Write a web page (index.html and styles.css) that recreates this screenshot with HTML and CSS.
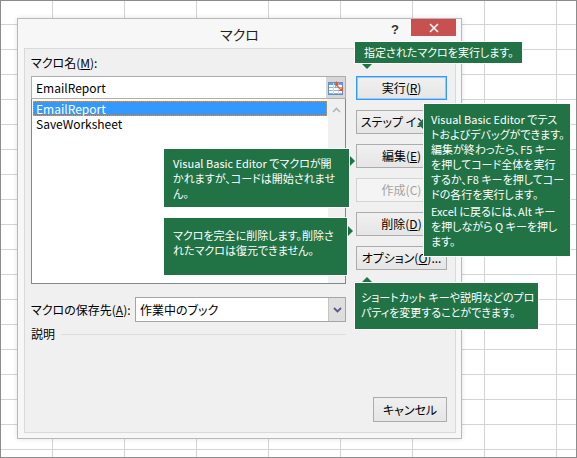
FILE: index.html
```html
<html lang="ja">
  <head>
    <meta charset="UTF-8" />
    <meta name="viewport" content="width=device-width, initial-scale=1.0" />
    <title>マクロ</title>
    <link rel="stylesheet" href="styles.css">
  </head>
  <body>
    <div class="sheet">
      <div class="dialog">
        <div class="titlebar">
          <span class="title">マクロ</span>
          <span class="help">?</span>
          <span class="close">
            <svg width="10" height="10" viewBox="0 0 10 10">
              <path d="M1 1 L9 9 M9 1 L1 9" stroke="#fff" stroke-width="1.6" />
            </svg>
          </span>
        </div>
        <div class="client">
          <div class="top">
            <div class="left">
              <div class="label">マクロ名(<u>M</u>):</div>
              <div class="name-row">
                <div class="name-input">EmailReport</div>
                <div class="pick-btn">
                  <svg width="16" height="16" viewBox="0 0 16 16">
                    <rect x="0.5" y="2.5" width="14" height="12" fill="#fff" stroke="#5f8fc4" />
                    <rect x="1" y="3" width="13" height="2" fill="#6d9fd6" />
                    <path d="M1 7.5 H14 M1 10.5 H14 M1 13.5 H14" stroke="#8db3df" />
                    <path d="M5.5 3 V14 M10.5 3 V14" stroke="#c9d9ee" />
                    <path d="M8 1 L11 4 L9.5 5.5 L13 9 L15 6 L15 11 L10 11 L12 9.5 L8.5 6 L7 7.5 Z" fill="#e4572e" />
                  </svg>
                </div>
              </div>
              <div class="listbox">
                <div class="items">
                  <div class="item selected">EmailReport</div>
                  <div class="item">SaveWorksheet</div>
                </div>
                <div class="scrollbar">
                  <svg width="9" height="6" viewBox="0 0 9 6">
                    <path d="M1 5 L4.5 1.5 L8 5" fill="none" stroke="#b5b5b5" stroke-width="1.6" />
                  </svg>
                </div>
              </div>
            </div>
            <div class="buttons">
              <button class="btn default">実行(<u>R</u>)</button>
              <button class="btn">ステップ イン(<u>S</u>)</button>
              <button class="btn">編集(<u>E</u>)</button>
              <button class="btn disabled">作成(C)</button>
              <button class="btn">削除(<u>D</u>)</button>
              <button class="btn">オプション(<u>O</u>)...</button>
            </div>
          </div>
          <div class="store-row">
            <span class="store-label">マクロの保存先(<u>A</u>):</span>
            <div class="combo">
              <span class="combo-text">作業中のブック</span>
              <span class="combo-btn">
                <svg width="9" height="6" viewBox="0 0 9 6">
                  <path d="M1 1 L4.5 4.5 L8 1" fill="none" stroke="#5a5a86" stroke-width="1.8" />
                </svg>
              </span>
            </div>
          </div>
          <div class="desc-row">
            <span>説明</span>
            <span class="rule"></span>
          </div>
          <div class="footer">
            <button class="btn cancel">キャンセル</button>
          </div>
        </div>
      </div>

      <!-- callouts -->
      <div class="callout c-run">指定されたマクロを実行します。</div>
      <div class="callout c-vbe">
        <div>Visual Basic Editor でテス<br />トおよびデバッグができます。<br />編集が終わったら、F5 キー<br />を押してコード全体を実行<br />するか、F8 キーを押してコー<br />ドの各行を実行します。</div>
        <div class="para">Excel に戻るには、Alt キー<br />を押しながら Q キーを押し<br />ます。</div>
      </div>
      <div class="callout c-edit">Visual Basic Editor でマクロが開<br />かれますが、コードは開始されませ<br />ん。</div>
      <div class="callout c-del">マクロを完全に削除します。削除さ<br />れたマクロは復元できません。</div>
      <div class="callout c-opt">ショートカット キーや説明などのプロ<br />パティを変更することができます。</div>
    </div>
  </body>
</html>
```

FILE: styles.css
```css
/* page */
body {
  margin: 0;
  padding: 0;
  font-family: "Noto Sans CJK JP", "Noto Sans", sans-serif;
  font-size: 12px;
  font-feature-settings: "palt";
  color: #000;
}

u {
  text-underline-offset: 1px;
}

/* spreadsheet behind the dialog */
.sheet {
  position: relative;
  width: 575px;
  height: 456px;
  border: 1px solid #8c8c8c;
  background-color: #fff;
  background-image: linear-gradient(to right, transparent 71px, #d4d4d4 71px),
    linear-gradient(to bottom, transparent 24px, #d4d4d4 24px);
  background-size: 72px 25px;
  background-position: -20px -1px;
  overflow: hidden;
}

/* dialog window */
.dialog {
  margin: 17px 0 0 16px;
  width: 445px;
  height: 421px;
  box-sizing: border-box;
  border: 1px solid #b9b9b9;
  background: #f7f7f7;
  padding: 0 5px 5px 6px;
  display: flex;
  flex-direction: column;
  box-shadow: 0 0 5px rgba(0, 0, 0, 0.12);
}

.titlebar {
  height: 29px;
  display: flex;
  align-items: flex-start;
}

.title {
  flex: 1;
  padding-left: 70px;
  text-align: center;
  font-size: 14px;
  line-height: 30px;
  color: #222;
}

.help {
  width: 20px;
  margin-right: 6px;
  text-align: center;
  font-family: "Liberation Sans", sans-serif;
  font-weight: bold;
  font-size: 13px;
  line-height: 22px;
  color: #333;
}

.close {
  width: 45px;
  height: 17px;
  background: #c75050;
  display: flex;
  align-items: center;
  justify-content: center;
}

.client {
  flex: 1;
  border: 1px solid #d9d9d9;
  background: #f0f0f0;
  padding: 6px 8px 10px 6px;
  display: flex;
  flex-direction: column;
}

.top {
  display: flex;
  gap: 10px;
}

.left {
  width: 315px;
}

.label {
  line-height: 16px;
  margin-bottom: 5px;
}

.name-row {
  display: flex;
  height: 23px;
}

.name-input {
  flex: 1;
  border: 1px solid #abadb3;
  border-right: none;
  background: #fff;
  padding-left: 4px;
  line-height: 21px;
}

.pick-btn {
  width: 19px;
  border: 1px solid #abadb3;
  border-left: none;
  background: #d6d6d6;
  display: flex;
  align-items: center;
  justify-content: center;
}

.listbox {
  margin-top: -1px;
  height: 186px;
  box-sizing: border-box;
  border: 1px solid #828790;
  background: #fff;
  display: flex;
}

.items {
  flex: 1;
  padding: 2px 1px 0 1px;
}

.item {
  height: 15px;
  line-height: 15px;
  padding-left: 3px;
}

.item.selected {
  background: #3399ff;
  color: #fff;
  outline: 1px dotted #e8913a;
  outline-offset: -1px;
}

.scrollbar {
  width: 17px;
  background: #f0f0f0;
  display: flex;
  justify-content: center;
  align-items: flex-start;
  padding-top: 8px;
  box-sizing: border-box;
}

/* command buttons */
.buttons {
  width: 91px;
  margin-top: 21px;
  display: flex;
  flex-direction: column;
  gap: 10px;
}

.btn {
  height: 24px;
  width: 91px;
  padding: 0;
  border: 1px solid #acacac;
  background: linear-gradient(#f0f0f0, #e5e5e5);
  font: inherit;
  color: #000;
  line-height: 22px;
  white-space: nowrap;
  overflow: hidden;
  text-align: center;
}

.btn.default {
  border-color: #3399ff;
  box-shadow: inset 0 0 0 1px #9cc9f4;
}

.btn.disabled {
  color: #a3a3a3;
  border-color: #d3d3d3;
  background: #f4f4f4;
}

.store-row {
  width: 315px;
  margin-top: 13px;
  display: flex;
  align-items: center;
}

.store-label {
  width: 104px;
}

.combo {
  flex: 1;
  height: 25px;
  box-sizing: border-box;
  border: 1px solid #a5a5a5;
  background: #fff;
  display: flex;
}

.combo-text {
  flex: 1;
  padding-left: 4px;
  line-height: 23px;
}

.combo-btn {
  width: 16px;
  background: #dedede;
  border-left: 1px solid #c4c4c4;
  display: flex;
  align-items: center;
  justify-content: center;
}

.desc-row {
  width: 315px;
  margin-top: 4px;
  line-height: 16px;
  display: flex;
  align-items: center;
}

.rule {
  flex: 1;
  height: 1px;
  margin-left: 6px;
  background: #d9dde0;
}

.footer {
  margin-top: auto;
  display: flex;
  justify-content: flex-end;
}

.btn.cancel {
  width: 74px;
  height: 25px;
}

/* green callouts */
.callout {
  position: absolute;
  box-sizing: border-box;
  background: #217346;
  color: #fff;
  border: 1px solid #fff;
  white-space: nowrap;
  font-size: 11px;
  line-height: 15px;
}

.callout::after {
  content: "";
  position: absolute;
  width: 0;
  height: 0;
}

.c-run {
  left: 353px;
  top: 40px;
  width: 169px;
  height: 23px;
  padding: 3px 0 0 9px;
}

.c-run::after {
  left: 7px;
  bottom: -6px;
  border-left: 5px solid transparent;
  border-right: 5px solid transparent;
  border-top: 5px solid #217346;
}

.c-vbe {
  left: 422px;
  top: 102px;
  width: 148px;
  height: 154px;
  padding: 8px 0 0 7px;
}

.c-vbe .para {
  margin-top: 2px;
}

.c-vbe::after {
  left: -6px;
  top: 15px;
  border-top: 5px solid transparent;
  border-bottom: 5px solid transparent;
  border-right: 5px solid #217346;
}

.c-edit {
  left: 162px;
  top: 147px;
  width: 187px;
  height: 60px;
  padding: 7px 0 0 9px;
}

.c-edit::after {
  right: -6px;
  top: 7px;
  border-top: 5px solid transparent;
  border-bottom: 5px solid transparent;
  border-left: 5px solid #217346;
}

.c-del {
  left: 162px;
  top: 216px;
  width: 185px;
  height: 59px;
  padding: 10px 0 0 9px;
}

.c-del::after {
  right: -6px;
  top: 8px;
  border-top: 5px solid transparent;
  border-bottom: 5px solid transparent;
  border-left: 5px solid #217346;
}

.c-opt {
  left: 353px;
  top: 281px;
  width: 185px;
  height: 48px;
  padding: 7px 0 0 6px;
}

.c-opt::after {
  left: 7px;
  top: -6px;
  border-left: 5px solid transparent;
  border-right: 5px solid transparent;
  border-bottom: 5px solid #217346;
}
```
